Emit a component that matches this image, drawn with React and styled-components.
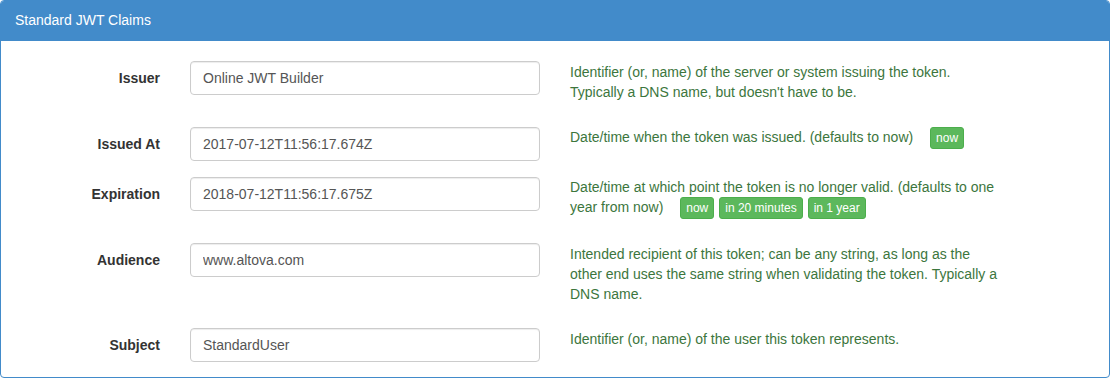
import React from "react";
import styled, { createGlobalStyle } from "styled-components";

const GlobalStyle = createGlobalStyle`
  html, body {
    margin: 0;
    padding: 0;
    background: #fff;
  }
  body {
    font-family: "Liberation Sans", Arial, sans-serif;
    font-size: 14px;
    line-height: 20px;
    color: #333;
  }
`;

const Panel = styled.div`
  width: 1110px;
  height: 378px;
  box-sizing: border-box;
  border: 1px solid #428bca;
  border-radius: 4px;
  overflow: hidden;
`;

const PanelHeading = styled.div`
  background: #428bca;
  color: #fff;
  padding: 10px 15px;
  border-bottom: 1px solid #428bca;
  margin: -1px -1px 0;
  font-size: 14px;
  line-height: 20px;
`;

const PanelBody = styled.div`
  padding: 20px 15px 0;
`;

const FormRow = styled.div`
  display: grid;
  grid-template-columns: 144px 350px 436px;
  column-gap: 30px;
  align-items: start;
  margin-bottom: ${(p) => p.gap}px;
`;

const Label = styled.label`
  text-align: right;
  font-weight: bold;
  padding-top: 7px;
  color: #333;
`;

const Input = styled.input`
  box-sizing: border-box;
  width: 100%;
  height: 34px;
  padding: 6px 12px;
  font-family: "Liberation Sans", Arial, sans-serif;
  font-size: 14px;
  color: #555;
  border: 1px solid #ccc;
  border-radius: 4px;
  box-shadow: inset 0 1px 1px rgba(0, 0, 0, 0.075);
  outline: none;
`;

const Help = styled.div`
  color: #3c763d;
  padding-top: ${(p) => p.top ?? 1}px;
  line-height: 20px;
`;

const Buttons = styled.span`
  display: inline-flex;
  gap: 5px;
  margin-left: 13px;
  vertical-align: middle;
  line-height: 18px;
`;

const SmallButton = styled.span`
  display: inline-block;
  padding: 1px 5px;
  font-size: 12px;
  line-height: 18px;
  color: #fff;
  background: #5cb85c;
  border: 1px solid #4cae4c;
  border-radius: 3px;
`;

const rows = [
  {
    label: "Issuer",
    value: "Online JWT Builder",
    gap: 25,
    help: (
      <Help>
        Identifier (or, name) of the server or system issuing the token.
        <br />
        Typically a DNS name, but doesn't have to be.
      </Help>
    ),
  },
  {
    label: "Issued At",
    value: "2017-07-12T11:56:17.674Z",
    gap: 16,
    help: (
      <Help top={0}>
        Date/time when the token was issued. (defaults to now){" "}
        <Buttons>
          <SmallButton>now</SmallButton>
        </Buttons>
      </Help>
    ),
  },
  {
    label: "Expiration",
    value: "2018-07-12T11:56:17.675Z",
    gap: 24,
    help: (
      <Help top={0}>
        Date/time at which point the token is no longer valid. (defaults to one
        year from now){" "}
        <Buttons>
          <SmallButton>now</SmallButton>
          <SmallButton>in 20 minutes</SmallButton>
          <SmallButton>in 1 year</SmallButton>
        </Buttons>
      </Help>
    ),
  },
  {
    label: "Audience",
    value: "www.altova.com",
    gap: 24,
    help: (
      <Help>
        Intended recipient of this token; can be any string, as long as the
        <br />
        other end uses the same string when validating the token. Typically a
        <br />
        DNS name.
      </Help>
    ),
  },
  {
    label: "Subject",
    value: "StandardUser",
    gap: 0,
    help: <Help>Identifier (or, name) of the user this token represents.</Help>,
  },
];

const App = () => {
  return (
    <>
      <GlobalStyle />
      <Panel>
        <PanelHeading>Standard JWT Claims</PanelHeading>
        <PanelBody>
          {rows.map((row) => (
            <FormRow key={row.label} gap={row.gap}>
              <Label>{row.label}</Label>
              <Input defaultValue={row.value} />
              {row.help}
            </FormRow>
          ))}
        </PanelBody>
      </Panel>
    </>
  );
};

export default App;
